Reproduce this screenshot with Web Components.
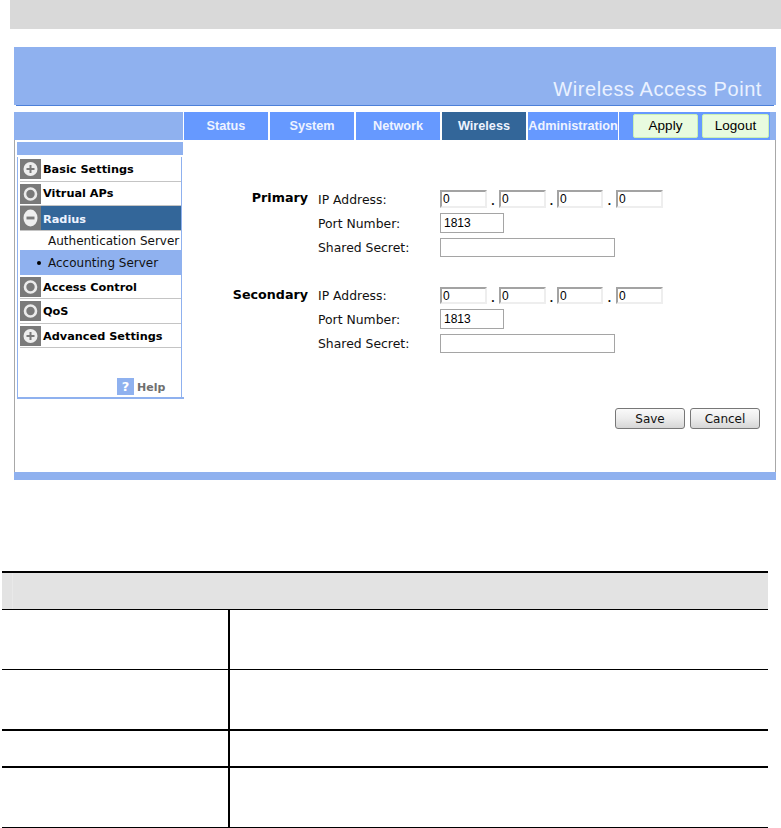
<!DOCTYPE html>
<html>
<head>
<meta charset="utf-8">
<title>Wireless Access Point</title>
<style>
  html, body { margin: 0; padding: 0; background: #fff; }
  body { font-family: "DejaVu Sans", sans-serif; width: 781px; height: 828px; overflow: hidden; }
</style>
</head>
<body>
<page-bar></page-bar>
<ap-panel>
  <ap-header slot="header">Wireless Access Point</ap-header>
  <ap-nav slot="nav"></ap-nav>
  <ap-sidebar slot="side">
    <side-item icon="plus" style="height:25px">Basic Settings</side-item>
    <side-item icon="ring">Vitrual APs</side-item>
    <side-item icon="minus" active low style="height:25px">Radius</side-item>
    <side-sub>Authentication Server</side-sub>
    <side-sub selected>Accounting Server</side-sub>
    <side-item icon="ring" low>Access Control</side-item>
    <side-item icon="ring" style="height:25px">QoS</side-item>
    <side-item icon="plus" low>Advanced Settings</side-item>
  </ap-sidebar>
  <radius-form slot="main">
    <server-group title="Primary" ip-height="18" style="margin-bottom:30px"></server-group>
    <server-group title="Secondary" ip-height="17"></server-group>
  </radius-form>
</ap-panel>
<doc-table>
  <doc-row style="height:59px;border-bottom-width:1px"></doc-row>
  <doc-row style="height:59px;border-bottom-width:2px"></doc-row>
  <doc-row style="height:35px;border-bottom-width:2px"></doc-row>
  <doc-row style="height:59px;border-bottom-width:1px"></doc-row>
</doc-table>

<script>
const LIGHT = '#8fb1ef';

class PageBar extends HTMLElement {
  constructor() {
    super();
    this.attachShadow({ mode: 'open' });
    this.shadowRoot.innerHTML = `<style>
      :host { display: block; height: 29px; margin-left: 10px; background: #d9d9d9; }
    </style>`;
  }
}
customElements.define('page-bar', PageBar);

class ApPanel extends HTMLElement {
  constructor() {
    super();
    this.attachShadow({ mode: 'open' });
    this.shadowRoot.innerHTML = `<style>
      :host { display: block; width: 762px; margin: 18px 0 0 14px; }
      .body { display: flex; height: 332px; box-sizing: border-box; border-left: 1px solid #a8a8a8; border-right: 1px solid #a8a8a8; }
      .foot { height: 8px; background: ${LIGHT}; }
      ::slotted([slot=main]) { flex: 1; }
    </style>
    <slot name="header"></slot>
    <slot name="nav"></slot>
    <div class="body"><slot name="side"></slot><slot name="main"></slot></div>
    <div class="foot"></div>`;
  }
}
customElements.define('ap-panel', ApPanel);

class ApHeader extends HTMLElement {
  constructor() {
    super();
    this.attachShadow({ mode: 'open' });
    this.shadowRoot.innerHTML = `<style>
      :host { display: block; height: 65px; }
      .blue { height: 58px; box-sizing: border-box; background: ${LIGHT}; display: flex; justify-content: flex-end; align-items: flex-end; padding: 0 14px 3px 0; }
      .title { font: 20px/26px "Liberation Sans", Arial, sans-serif; letter-spacing: .57px; color: #eaf1ff; }
      .line { height: 1px; margin: 0 2px; background: #4d80d9; }
    </style>
    <div class="blue"><span class="title"><slot></slot></span></div>
    <div class="line"></div>`;
  }
}
customElements.define('ap-header', ApHeader);

class ApNav extends HTMLElement {
  constructor() {
    super();
    this.attachShadow({ mode: 'open' });
    const tabs = [['Status', 84], ['System', 84], ['Network', 84], ['Wireless', 84], ['Administration', 90]];
    this.shadowRoot.innerHTML = `<style>
      :host { display: flex; height: 28px; background: ${LIGHT}; }
      .lead { width: 169px; }
      .tabs { display: flex; gap: 2px; padding: 0 1px; background: #fff; }
      .tab { display: flex; align-items: center; justify-content: center; background: #6699ff; color: #eef3ff; white-space: nowrap;
             font: bold 12.7px "Liberation Sans", Arial, sans-serif; }
      .tab.on { background: #336699; }
      .tools { width: 151px; background: #6699ff; display: flex; gap: 4px; padding: 2px 0 2px 14px; box-sizing: border-box; }
      .btn { display: flex; align-items: center; justify-content: center; box-sizing: border-box; height: 24px; padding-bottom: 2px; background: #e8fbdf;
             border: 1px solid #c9f0b4; border-radius: 2px; font: 13.5px "Liberation Sans", Arial, sans-serif; color: #000; }
    </style>
    <div class="lead"></div>
    <div class="tabs">${tabs.map(([t, w]) => `<div class="tab${t === 'Wireless' ? ' on' : ''}" style="width:${w}px">${t}</div>`).join('')}</div>
    <div class="tools">
      <div class="btn" style="width:65px">Apply</div>
      <div class="btn" style="width:67px">Logout</div>
    </div>`;
  }
}
customElements.define('ap-nav', ApNav);

class ApSidebar extends HTMLElement {
  constructor() {
    super();
    this.attachShadow({ mode: 'open' });
    this.shadowRoot.innerHTML = `<style>
      :host { display: block; width: 168px; height: 259px; margin: 2px 0 0 2px; box-sizing: border-box; flex: none; position: relative; }
      .strip { height: 13px; width: 166px; background: ${LIGHT}; margin-bottom: 2px; }
      .list { box-sizing: border-box; height: 240px; width: 165px; border-left: 1px solid ${LIGHT}; border-right: 1px solid ${LIGHT}; padding-left: 2px; display: flex; flex-direction: column; }
      .bottom { height: 2px; width: 167px; background: ${LIGHT}; }
      .help { margin: auto 0 0 97px; display: flex; align-items: flex-start; gap: 3px; font: bold 11px/19px "DejaVu Sans", sans-serif; color: #6f6f6f; }
      .q { width: 17px; height: 17px; background: ${LIGHT}; color: #fff; display: flex; align-items: center; justify-content: center; font-size: 13px; }
    </style>
    <div class="strip"></div>
    <div class="list"><slot></slot><div class="help"><span class="q">?</span>Help</div></div>
    <div class="bottom"></div>`;
  }
}
customElements.define('ap-sidebar', ApSidebar);

class SideItem extends HTMLElement {
  static icons = {
    plus: '<circle cx="10.5" cy="10" r="7" fill="#eee"/><path d="M10.5 6v8M6.5 10h8" stroke="#7a7a7a" stroke-width="2"/>',
    minus: '<circle cx="10.5" cy="10" r="7" fill="#eee"/><path d="M6.5 10h8" stroke="#7a7a7a" stroke-width="2.4"/>',
    ring: '<circle cx="10.5" cy="10" r="5.5" fill="#7a7a7a" stroke="#ececec" stroke-width="2.6"/>'
  };
  constructor() {
    super();
    this.attachShadow({ mode: 'open' });
  }
  connectedCallback() {
    const icon = SideItem.icons[this.getAttribute('icon')] || '';
    this.shadowRoot.innerHTML = `<style>
      :host { display: flex; align-items: center; gap: 2px; height: 24px; flex: none; box-sizing: border-box; width: 161px;
              border-bottom: 1px solid #c4c4c4; font: bold 11.3px "DejaVu Sans", sans-serif; color: #000; }
      :host([active]) { background: #336699; color: #eef3ff; }
      :host([low]) span { padding-top: 2px; }
      svg { width: 21px; height: 20px; flex: none; display: block; }
      :host([active]) svg { height: 24px; }
    </style>
    <svg viewBox="0 0 21 20" preserveAspectRatio="none"><rect width="21" height="20" fill="#7a7a7a"/>${icon}</svg>
    <span><slot></slot></span>`;
  }
}
customElements.define('side-item', SideItem);

class SideSub extends HTMLElement {
  constructor() {
    super();
    this.attachShadow({ mode: 'open' });
    this.shadowRoot.innerHTML = `<style>
      :host { display: flex; align-items: center; height: 19px; flex: none; width: 161px; box-sizing: border-box; padding-left: 28px; position: relative; white-space: nowrap;
              font: 12px "DejaVu Sans", sans-serif; color: #111; overflow: hidden; }
      :host([selected]) { height: 25px; background: ${LIGHT}; }
      :host([selected])::before { content: ""; position: absolute; left: 17px; top: 11px; width: 4px; height: 4px; border-radius: 50%; background: #000; }
    </style><slot></slot>`;
  }
}
customElements.define('side-sub', SideSub);

class RadiusForm extends HTMLElement {
  constructor() {
    super();
    this.attachShadow({ mode: 'open' });
    this.shadowRoot.innerHTML = `<style>
      :host { display: block; padding-top: 50px; box-sizing: border-box; }
      .actions { display: flex; justify-content: flex-end; gap: 5px; margin: 55px 15px 0 0; }
      .btn { width: 70px; height: 21px; box-sizing: border-box; border: 1px solid #777; border-radius: 3px; display: flex; align-items: center; justify-content: center;
             background: linear-gradient(#fafafa, #ececec 50%, #d6d6d6); font: 12px "DejaVu Sans", sans-serif; color: #111; }
    </style>
    <slot></slot>
    <div class="actions"><div class="btn">Save</div><div class="btn">Cancel</div></div>`;
  }
}
customElements.define('radius-form', RadiusForm);

class ServerGroup extends HTMLElement {
  constructor() {
    super();
    this.attachShadow({ mode: 'open' });
  }
  connectedCallback() {
    const title = this.getAttribute('title');
    const ipHeight = this.getAttribute('ip-height') || '18';
    const octets = [[47, 12], [47, 11], [46, 13], [47, 0]];
    this.removeAttribute('title');
    this.shadowRoot.innerHTML = `<style>
      :host { display: grid; grid-template-columns: 133px 122px auto; grid-template-rows: ${ipHeight}px 20px 19px; row-gap: 5px; justify-content: start;
              font: 12.4px "DejaVu Sans", sans-serif; color: #111; }
      .title { text-align: right; font-weight: bold; font-size: 12.7px; color: #000; padding-right: 10px; line-height: 16px; white-space: nowrap; }
      .lab { align-self: center; white-space: nowrap; }
      .ip { display: flex; }
      .dot { text-align: center; font: bold 12px/22px "Liberation Sans", Arial, sans-serif; }
      .box { box-sizing: border-box; font: 12px "Liberation Sans", Arial, sans-serif; color: #000; display: flex; align-items: center; padding-left: 3px; background: #fff; }
      .inset { border: 2px solid; border-color: #a3a3a3 #eee #eee #a3a3a3; padding-left: 1px; }
      .flat { border: 1px solid #a5a5a5; }
    </style>
    <div class="title">${title}</div>
    <div class="lab">IP Address:</div>
    <div class="ip">${octets.map(([w, d], i) => `<div class="box inset" style="width:${w}px">0</div>${i < 3 ? `<div class="dot" style="width:${d}px">.</div>` : ''}`).join('')}</div>
    <div></div><div class="lab">Port Number:</div><div class="box flat" style="width:64px">1813</div>
    <div></div><div class="lab">Shared Secret:</div><div class="box flat" style="width:175px"></div>`;
  }
}
customElements.define('server-group', ServerGroup);

class DocTable extends HTMLElement {
  constructor() {
    super();
    this.attachShadow({ mode: 'open' });
    this.shadowRoot.innerHTML = `<style>
      :host { display: block; width: 766px; margin: 91px 0 0 2px; border-top: 2px solid #000; }
      .head { height: 36px; background: #e3e3e3; border-bottom: 1px solid #000; box-sizing: content-box; }
      .head i { display: block; width: 1px; height: 100%; margin-left: 10px; background: #e9e9e9; }
    </style>
    <div class="head"><i></i></div>
    <slot></slot>`;
  }
}
customElements.define('doc-table', DocTable);

class DocRow extends HTMLElement {
  constructor() {
    super();
    this.attachShadow({ mode: 'open' });
    this.shadowRoot.innerHTML = `<style>
      :host { display: grid; grid-template-columns: 226px 1fr; border-bottom: 0 solid #000; }
      .val { border-left: 2px solid #000; }
    </style>
    <div><slot name="name"></slot></div>
    <div class="val"><slot></slot></div>`;
  }
}
customElements.define('doc-row', DocRow);
</script>
</body>
</html>
